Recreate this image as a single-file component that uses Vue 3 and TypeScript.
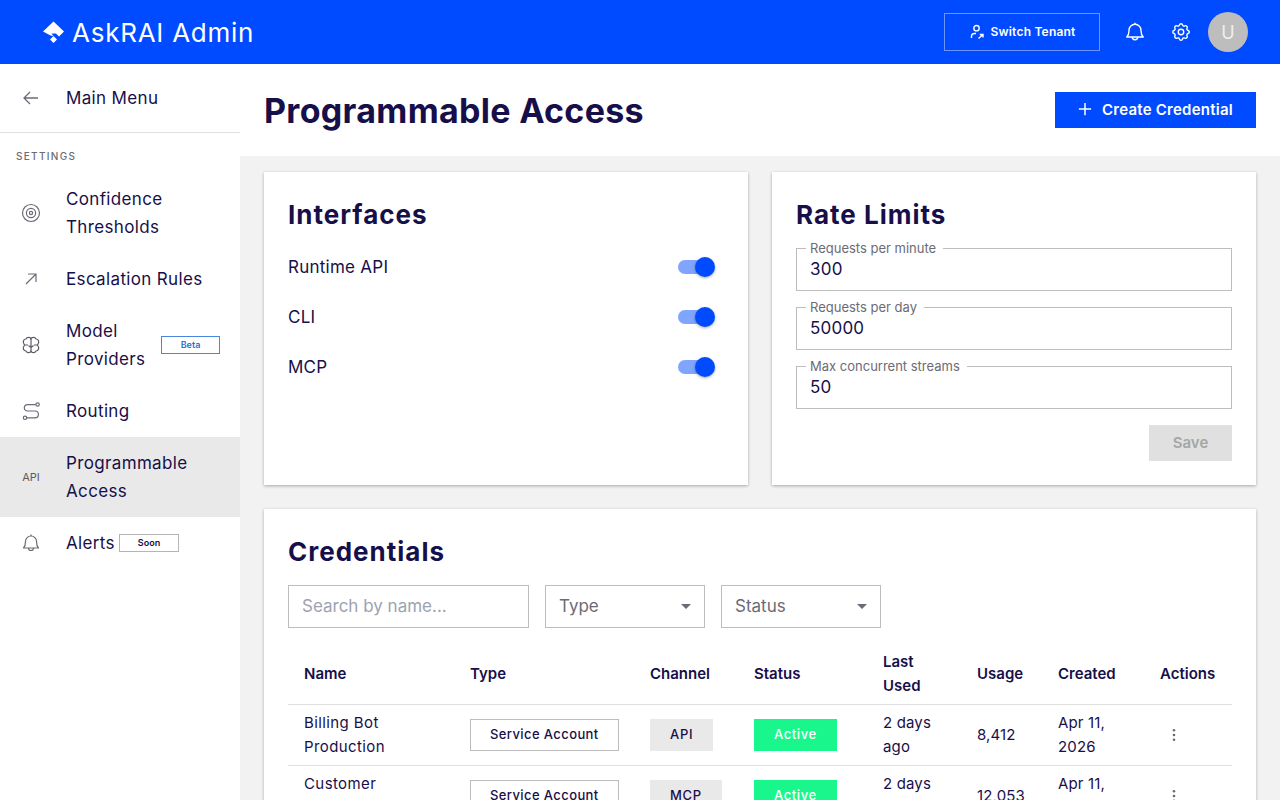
<script setup lang="ts">
const navItems = [
  { label: 'Confidence Thresholds', icon: 'target' },
  { label: 'Escalation Rules', icon: 'arrow' },
  { label: 'Model Providers', icon: 'brain', badge: 'Beta' },
  { label: 'Routing', icon: 'route' },
  { label: 'Programmable Access', icon: 'api', active: true },
  { label: 'Alerts', icon: 'bell', badge: 'Soon' },
]

const interfaces = ['Runtime API', 'CLI', 'MCP']

const limits = [
  { label: 'Requests per minute', value: '300' },
  { label: 'Requests per day', value: '50000' },
  { label: 'Max concurrent streams', value: '50' },
]

const credentials = [
  { name: 'Billing Bot Production', type: 'Service Account', channel: 'API', status: 'Active', lastUsed: '2 days ago', usage: '8,412', created: 'Apr 11, 2026' },
  { name: 'Customer Support', type: 'Service Account', channel: 'MCP', status: 'Active', lastUsed: '2 days ago', usage: '12,053', created: 'Apr 11, 2026' },
]
</script>

<template>
  <div class="shell">
    <header class="topbar">
      <div class="brand">
        <svg class="logo" viewBox="0 0 21 22" fill="#fff">
          <path d="M10.5 0.5 L21 10.5 L16 15.5 L13 12.5 H8.5 L10.5 15 L7.5 14.5 L0 10.5 Z" />
          <path d="M10.5 15 L14 18.5 L10.5 22 L7 18.5 Z" />
        </svg>
        <span>AskRAI Admin</span>
      </div>
      <div class="topbar-right">
        <button class="switch-btn">
          <svg viewBox="0 0 16 16" fill="none" stroke="#fff" stroke-width="1.4">
            <circle cx="7.5" cy="4.2" r="2.7" />
            <path d="M2.5 14 V12 A3 3 0 0 1 5.5 9.5 H7" />
            <path d="M9.5 14.5 L14 10.5 M10.8 10.5 H14 V13.5" />
          </svg>
          Switch Tenant
        </button>
        <svg class="top-icon" viewBox="0 0 24 24" fill="none" stroke="#fff" stroke-width="1.5" stroke-linejoin="round">
          <path d="M3 17.5 C5 15.5 5.5 13 5.5 10 A6.5 6.5 0 0 1 18.5 10 C18.5 13 19 15.5 21 17.5 Z" />
          <path d="M9 17.5 A3 3 0 0 0 15 17.5" />
          <path d="M12 3.5 V1.8" />
        </svg>
        <svg class="top-icon" viewBox="0 0 24 24" fill="none" stroke="#fff" stroke-width="1.5" stroke-linejoin="round">
          <circle cx="12" cy="12" r="3" />
          <path d="M10.325 4.317c.426-1.756 2.924-1.756 3.35 0a1.724 1.724 0 0 0 2.573 1.066c1.543-.94 3.31.826 2.37 2.37a1.724 1.724 0 0 0 1.065 2.572c1.756.426 1.756 2.924 0 3.35a1.724 1.724 0 0 0-1.066 2.573c.94 1.543-.826 3.31-2.37 2.37a1.724 1.724 0 0 0-2.572 1.065c-.426 1.756-2.924 1.756-3.35 0a1.724 1.724 0 0 0-2.573-1.066c-1.543.94-3.31-.826-2.37-2.37a1.724 1.724 0 0 0-1.065-2.572c-1.756-.426-1.756-2.924 0-3.35a1.724 1.724 0 0 0 1.066-2.573c-.94-1.543.826-3.31 2.37-2.37c1 .608 2.296.07 2.572-1.065z" />
        </svg>
        <div class="avatar">U</div>
      </div>
    </header>

    <div class="body">
      <aside class="sidebar">
        <div class="back-row">
          <svg class="nav-icon" viewBox="0 0 20 20" fill="none" stroke="#6b6b76" stroke-width="1.3">
            <path d="M17 10 H3 M9 4 L3 10 L9 16" />
          </svg>
          <span>Main Menu</span>
        </div>
        <div class="section-label">SETTINGS</div>
        <nav>
          <div v-for="item in navItems" :key="item.label" class="nav-item" :class="{ active: item.active }">
            <span class="nav-icon-wrap">
              <svg v-if="item.icon === 'target'" class="nav-icon" viewBox="0 0 20 20" fill="none" stroke="#6b6b76" stroke-width="1.2">
                <circle cx="10" cy="10" r="8.5" />
                <circle cx="10" cy="10" r="4.6" />
                <circle cx="10" cy="10" r="1.6" />
              </svg>
              <svg v-else-if="item.icon === 'arrow'" class="nav-icon" viewBox="0 0 20 20" fill="none" stroke="#6b6b76" stroke-width="1.2">
                <path d="M5 15 L15 5 M7 5 H15 V13" />
              </svg>
              <svg v-else-if="item.icon === 'brain'" class="nav-icon" viewBox="0 0 20 20" fill="none" stroke="#5b5b66" stroke-width="1.2" stroke-linejoin="round">
                <path d="M10 4 C9.5 2 6 1.5 5 4 C2.5 4 1.5 7 3 9 L3.5 10 L3 11 C1.5 13 2.5 16 5 16 C6 18.5 9.5 18 10 16 C10.5 18 14 18.5 15 16 C17.5 16 18.5 13 17 11 L16.5 10 L17 9 C18.5 7 17.5 4 15 4 C14 1.5 10.5 2 10 4 Z" />
                <path d="M10 4 V16 M3.5 10 H7 M16.5 10 H13 M10 12.5 L7.5 10.5 M10 12.5 L12.5 10.5" />
              </svg>
              <svg v-else-if="item.icon === 'route'" class="nav-icon" viewBox="0 0 20 20" fill="none" stroke="#6b6b76" stroke-width="1.2">
                <circle cx="4" cy="16.8" r="1.7" />
                <circle cx="16.6" cy="3.5" r="1.7" />
                <path d="M6 16.8 H14 A3.4 3.4 0 0 0 14 10 H6.5 A3.2 3.2 0 0 1 6.5 3.6 H14.6" />
              </svg>
              <span v-else-if="item.icon === 'api'" class="api-glyph">API</span>
              <svg v-else class="nav-icon" viewBox="0 0 20 20" fill="none" stroke="#6b6b76" stroke-width="1.2" stroke-linejoin="round">
                <path d="M2.5 15 C4 13.5 4.5 11 4.5 8.5 A5.5 5.5 0 0 1 15.5 8.5 C15.5 11 16 13.5 17.5 15 Z" />
                <path d="M7.5 15 A2.5 2.5 0 0 0 12.5 15" />
                <path d="M10 3 V1.5" />
              </svg>
            </span>
            <span class="nav-label">{{ item.label }}</span>
            <span v-if="item.badge" class="nav-badge" :class="item.badge.toLowerCase()">{{ item.badge }}</span>
          </div>
        </nav>
      </aside>

      <main class="main">
        <div class="page-head">
          <h1>Programmable Access</h1>
          <button class="primary-btn">
            <svg viewBox="0 0 16 16" fill="none" stroke="#fff" stroke-width="1.7"><path d="M8 1 V15 M1 8 H15" /></svg>
            Create Credential
          </button>
        </div>

        <div class="content">
          <div class="cards-row">
            <section class="card">
              <h2>Interfaces</h2>
              <div v-for="name in interfaces" :key="name" class="toggle-row">
                <span>{{ name }}</span>
                <span class="toggle"><span class="knob"></span></span>
              </div>
            </section>

            <section class="card">
              <h2>Rate Limits</h2>
              <div class="limits">
                <fieldset v-for="limit in limits" :key="limit.label" class="field">
                  <legend>{{ limit.label }}</legend>
                  <div class="field-value">{{ limit.value }}</div>
                </fieldset>
              </div>
              <div class="save-row">
                <button class="save-btn">Save</button>
              </div>
            </section>
          </div>

          <section class="card">
            <h2>Credentials</h2>
            <div class="filters">
              <div class="box search">Search by name...</div>
              <div class="box select">Type<span class="caret"></span></div>
              <div class="box select">Status<span class="caret"></span></div>
            </div>
            <table class="table">
              <colgroup>
                <col style="width: 166px" />
                <col style="width: 180px" />
                <col style="width: 104px" />
                <col style="width: 129px" />
                <col style="width: 94px" />
                <col style="width: 81px" />
                <col style="width: 102px" />
                <col style="width: 88px" />
              </colgroup>
              <thead>
                <tr>
                  <th>Name</th>
                  <th>Type</th>
                  <th>Channel</th>
                  <th>Status</th>
                  <th>Last Used</th>
                  <th>Usage</th>
                  <th>Created</th>
                  <th>Actions</th>
                </tr>
              </thead>
              <tbody>
                <tr v-for="row in credentials" :key="row.name">
                  <td class="name-cell">{{ row.name }}</td>
                  <td><span class="tag outline">{{ row.type }}</span></td>
                  <td><span class="tag grey">{{ row.channel }}</span></td>
                  <td><span class="tag green">{{ row.status }}</span></td>
                  <td>{{ row.lastUsed }}</td>
                  <td>{{ row.usage }}</td>
                  <td>{{ row.created }}</td>
                  <td>
                    <svg class="dots" viewBox="0 0 16 16" fill="#6b6b76">
                      <circle cx="8" cy="3.2" r="1.3" />
                      <circle cx="8" cy="8" r="1.3" />
                      <circle cx="8" cy="12.8" r="1.3" />
                    </svg>
                  </td>
                </tr>
              </tbody>
            </table>
          </section>
        </div>
      </main>
    </div>
  </div>
</template>

<style>
html,
body {
  margin: 0;
  height: 100%;
  overflow: hidden;
}
</style>

<style scoped>
.shell {
  height: 100vh;
  display: flex;
  flex-direction: column;
  font-family: Inter, "Liberation Sans", sans-serif;
  color: #170f49;
  overflow: hidden;
}

.topbar {
  height: 64px;
  flex-shrink: 0;
  background: #004bff;
  display: flex;
  align-items: center;
  justify-content: space-between;
  padding: 0 32px 0 43px;
  color: #fff;
}

.brand {
  display: flex;
  align-items: center;
  gap: 8px;
  font-size: 26px;
  font-weight: 400;
  letter-spacing: 0.75px;
}

.logo {
  width: 21px;
  height: 22px;
}

.topbar-right {
  display: flex;
  align-items: center;
}

.switch-btn {
  width: 156px;
  height: 38px;
  display: flex;
  align-items: center;
  justify-content: center;
  gap: 6px;
  padding: 0 0 1px;
  background: transparent;
  border: 1px solid #6c96ff;
  color: #fff;
  font: 600 12px Inter, sans-serif;
  letter-spacing: 0.2px;
}

.switch-btn svg {
  width: 16px;
  height: 16px;
}

.top-icon {
  width: 22px;
  height: 22px;
  margin-left: 24px;
}

.avatar {
  width: 40px;
  height: 40px;
  margin-left: 16px;
  border-radius: 50%;
  background: #bdbdbd;
  color: #eee;
  display: flex;
  align-items: center;
  justify-content: center;
  font-size: 18px;
}

.body {
  flex: 1;
  display: flex;
  min-height: 0;
}

.sidebar {
  width: 240px;
  flex-shrink: 0;
  background: #fff;
}

.back-row {
  height: 68px;
  display: flex;
  align-items: center;
  border-bottom: 1px solid #e0e0e0;
  font-size: 17px;
  letter-spacing: 0.35px;
}

.back-row .nav-icon {
  margin-left: 21px;
  margin-right: 25px;
}

.section-label {
  padding: 16px 16px 0;
  height: 24px;
  font-size: 10px;
  font-weight: 500;
  letter-spacing: 1.3px;
  line-height: 14px;
  color: #6b6b76;
}

.nav-item {
  display: flex;
  align-items: center;
  padding: 12px 20px 12px 0;
  font-size: 17px;
  line-height: 28px;
  letter-spacing: 0.35px;
}

.nav-item.active {
  background: #e9e9e9;
}

.nav-icon-wrap {
  width: 66px;
  flex-shrink: 0;
  display: flex;
  justify-content: center;
  padding-right: 4px;
  box-sizing: border-box;
}

.nav-icon {
  width: 20px;
  height: 20px;
}

.api-glyph {
  font-size: 11px;
  font-weight: 400;
  color: #5b5b66;
  letter-spacing: 0;
}

.nav-label {
  flex: 1;
}

.nav-badge {
  box-sizing: border-box;
  height: 18px;
  display: flex;
  align-items: center;
  justify-content: center;
  font-size: 9px;
  font-weight: 600;
  letter-spacing: 0;
}

.nav-badge.beta {
  width: 59px;
  border: 1px solid #4a86e0;
  color: #2a6fd6;
}

.nav-badge.soon {
  width: 60px;
  flex: none;
  border: 1px solid #b5b5b5;
  margin-right: 41px;
}

.main {
  flex: 1;
  min-width: 0;
  background: #f2f2f2;
  overflow: hidden;
}

.page-head {
  height: 92px;
  background: #fff;
  display: flex;
  align-items: center;
  justify-content: space-between;
  padding: 0 24px;
}

h1 {
  margin: 0;
  font-size: 34px;
  font-weight: 700;
  letter-spacing: 0.3px;
}

.primary-btn {
  width: 201px;
  height: 36px;
  display: flex;
  align-items: center;
  justify-content: center;
  gap: 10px;
  padding: 0 0 2px;
  border: none;
  background: #004bff;
  color: #fff;
  font: 600 15px Inter, sans-serif;
  letter-spacing: 0.25px;
}

.primary-btn svg {
  width: 14px;
  height: 14px;
}

.content {
  padding: 16px 24px;
  display: flex;
  flex-direction: column;
  gap: 24px;
}

.cards-row {
  display: grid;
  grid-template-columns: 1fr 1fr;
  gap: 24px;
}

.card {
  background: #fff;
  padding: 24px;
  box-shadow: 0 1px 3px rgba(0, 0, 0, 0.3);
}

h2 {
  margin: 0;
  font-size: 26px;
  font-weight: 700;
  line-height: 38px;
  letter-spacing: 1px;
}

.toggle-row {
  height: 50px;
  display: flex;
  align-items: center;
  justify-content: space-between;
  font-size: 17px;
  letter-spacing: 0.25px;
  padding-right: 10px;
}

h2 + .toggle-row {
  margin-top: 8px;
}

.toggle {
  position: relative;
  width: 36px;
  height: 14px;
  border-radius: 7px;
  background: #7fa5ff;
}

.knob {
  position: absolute;
  right: -1px;
  top: -3px;
  width: 20px;
  height: 20px;
  border-radius: 50%;
  background: #004bff;
  box-shadow: 0 1px 3px rgba(0, 0, 0, 0.35);
}

.limits {
  display: flex;
  flex-direction: column;
  gap: 16px;
  margin-top: 14px;
}

.field {
  box-sizing: border-box;
  height: 48px;
  margin: -5px 0 0;
  padding: 0 13px;
  border: 1px solid #bdbdbd;
}

legend {
  padding: 0 7px 0 4px;
  margin-left: -4px;
  font-size: 13px;
  line-height: 10px;
  color: #6b6b76;
}

.field-value {
  font-size: 17px;
  line-height: 24px;
  margin-top: 4px;
  letter-spacing: 0.2px;
}

.save-row {
  display: flex;
  justify-content: flex-end;
  margin-top: 16px;
}

.save-btn {
  width: 83px;
  height: 36px;
  padding: 0 0 2px;
  border: none;
  background: #e0e0e0;
  color: #a6a6a6;
  font: 600 15px Inter, sans-serif;
}

.filters {
  display: flex;
  gap: 16px;
  margin-top: 14px;
}

.box {
  box-sizing: border-box;
  height: 43px;
  display: flex;
  align-items: center;
  padding: 0 13px 2px;
  border: 1px solid #bdbdbd;
  font-size: 17px;
  color: #6b6b76;
}

.search {
  width: 241px;
  color: #9ca3af;
}

.select {
  width: 160px;
  justify-content: space-between;
}

.caret {
  width: 0;
  height: 0;
  margin-top: 2px;
  border-left: 5px solid transparent;
  border-right: 5px solid transparent;
  border-top: 5px solid #6b6b76;
}

.table {
  width: 100%;
  margin-top: 16px;
  table-layout: fixed;
  border-collapse: collapse;
}

th {
  padding: 6px 16px;
  text-align: left;
  font-size: 15px;
  font-weight: 600;
  line-height: 24px;
  border-bottom: 1px solid #e0e0e0;
}

td {
  padding: 6px 16px;
  font-size: 15px;
  line-height: 24px;
  letter-spacing: 0.15px;
  border-bottom: 1px solid #e0e0e0;
}

td.name-cell {
  letter-spacing: 0.4px;
}

.tag {
  box-sizing: border-box;
  display: inline-flex;
  align-items: center;
  justify-content: center;
  height: 32px;
  padding: 0 20px 2px;
  font-size: 13px;
  font-weight: 500;
  letter-spacing: 0.4px;
  vertical-align: middle;
  white-space: nowrap;
}

.tag.outline {
  padding: 0 19px 2px;
  border: 1px solid #bdbdbd;
}

.tag.grey {
  background: #e9e9e9;
  letter-spacing: 0.7px;
}

.tag.green {
  background: #19f78c;
  color: #fff;
  letter-spacing: 0.6px;
}

.dots {
  display: block;
  width: 16px;
  height: 16px;
  margin-left: 6px;
}
</style>
